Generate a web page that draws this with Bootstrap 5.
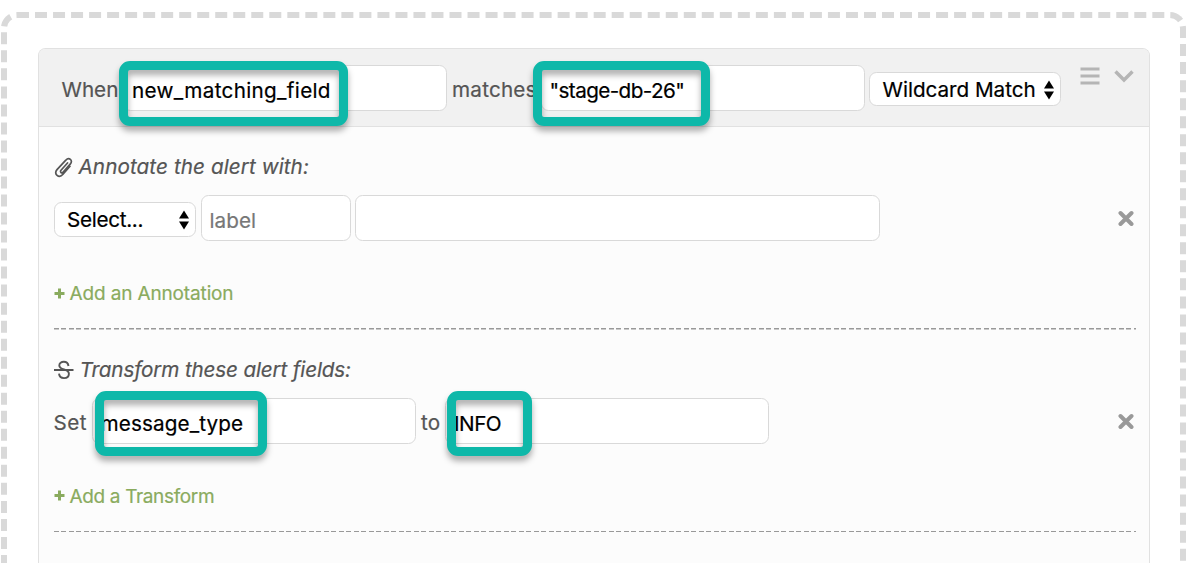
<!DOCTYPE html>
<html lang="en">
<head>
<meta charset="utf-8">
<meta name="viewport" content="width=device-width, initial-scale=1">
<title>Alert rule</title>
<link href="https://cdn.jsdelivr.net/npm/bootstrap@5.3.0/dist/css/bootstrap.min.css" rel="stylesheet">
<style>
  body { font-family: Inter, "Liberation Sans", sans-serif; font-size: 20.7px; line-height: 30px; color: #555; background: #fff; height: 100vh; overflow: hidden; padding-top: 12px; -webkit-text-stroke: .2px; }
  .drop-zone { margin-left: 1px; width: 1185px; height: calc(100vh - 12px); border: 6px dashed #d9d9d9; border-bottom: 0; border-radius: 16px 16px 0 0; padding: 30px 30.5px 0; }
  .rule-card { width: 1112.5px; height: 100%; border: 1.5px solid #e1e1e1; border-bottom: 0; border-radius: 7.5px 7.5px 0 0; background: #fcfcfc; --bs-card-color: #555; }
  .rule-head { height: 78px; padding: 15.5px 15px 0 23px; background: #f1f1f1; border-bottom: 1.5px solid #e1e1e1; border-radius: 6px 6px 0 0; }
  .rule-body { padding: 0 15px; }
  .section { height: 202.5px; padding-top: 24.5px; background: repeating-linear-gradient(90deg, #999 0 5px, transparent 5px 7.5px) left bottom / 100% 1.5px no-repeat; margin-right: -1.5px; padding-right: 1.5px; }
  .section h2 { font-size: 20.7px; line-height: 30px; font-style: italic; font-weight: 400; margin: 0 0 13.5px; height: 30px; gap: 6px; }
  .field { position: relative; }
  .form-control.box { height: 46px; padding: 5px 8px 0; border: 1.5px solid #d9d9d9; border-radius: 7.5px; font-size: 20.7px; line-height: 30px; color: #000; background: #fff; }
  .form-control.box::placeholder { color: #777; opacity: 1; }
  .w-rule { width: 324px; } .w-type { width: 142.5px; } .w-label { width: 150px; } .w-value { width: 525px; } .w-mode { width: 191.5px; }
  .pick { height: 34.5px; margin-top: 3px; padding: 1px 5px 0 12.5px; border: 1.5px solid #d9d9d9; border-radius: 7.5px; background: #fff; color: #000; line-height: 32px; text-align: left; }
  .ring { position: absolute; top: -3.5px; height: 65px; border: 9px solid #0eb8a9; border-radius: 11px; filter: drop-shadow(0 5px 3px rgba(0,0,0,.32)); pointer-events: none; z-index: 2; }
  .ring-field { left: -4px; width: 229px; } .ring-value { left: -8px; width: 177px; }
  .ring-key { left: 3px; top: -7px; width: 172px; } .ring-to { left: 2px; top: -7px; width: 85px; }
  .lbl-when { width: 61.5px; } .lbl-matches { width: 93.500px; letter-spacing: .2px; padding-left: 5px; }
  .lbl-set { width: 38px; letter-spacing: .5px; } .lbl-to { width: 25.5px; padding-left: 1.5px; letter-spacing: .3px; }
  label { padding-top: 5px; }
  .t-field { letter-spacing: .32px; } .t-value { letter-spacing: -.6px; } .t-mode { letter-spacing: -.03px; }
  .t-key { letter-spacing: .12px; }
  .t-ann { letter-spacing: .07px; } .t-trans { letter-spacing: -.17px; padding-top: 1.5px; } .t-info { letter-spacing: -.5px; } .t-sel { letter-spacing: -.3px; }
  .add { font-size: 19px; line-height: 28px; color: #8aab5e; text-decoration: none; gap: 5px; margin-top: 39px; letter-spacing: -.14px; }
  .add svg { margin-bottom: 2px; }
  .add-t { letter-spacing: -.35px; }
  .bare { border: 0; background: none; padding: 0; line-height: 0; }
  .btn-fold { margin-left: 14px; }
  .gap-field { margin-left: 4.6px; }
  svg { display: block; flex: none; }
</style>
</head>
<body>
<main class="drop-zone">
  <section class="card rule-card">
    <header class="rule-head d-flex align-items-start">
      <div class="d-flex align-items-center">
        <label class="lbl-when text-nowrap">When</label>
        <div class="field"><input class="form-control box w-rule t-field" value="new_matching_field"><span class="ring ring-field"></span></div>
        <label class="lbl-matches text-nowrap">matches</label>
        <div class="field"><input class="form-control box w-rule t-value" value='"stage-db-26"'><span class="ring ring-value"></span></div>
        <button type="button" class="pick w-mode t-mode d-flex align-items-center justify-content-between gap-field"><span>Wildcard Match</span>
          <svg width="12" height="22" viewBox="0 0 12 22"><path d="M6 1.500 11 9.500H1zM6 20.500 1 12.500h10z"/></svg></button>
      </div>
      <div class="d-flex ms-auto">
        <button type="button" class="bare" aria-label="Reorder"><svg width="20" height="22" viewBox="0 0 20 22"><path d="M.5 4h19M.5 11h19M.5 18h19" stroke="#b5b5b5" stroke-width="3"/></svg></button>
        <button type="button" class="bare btn-fold" aria-label="Collapse"><svg width="20" height="22" viewBox="0 0 20 22"><path d="M1.500 6.500 10 15l8.500-8.500" fill="none" stroke="#b5b5b5" stroke-width="3.400"/></svg></button>
      </div>
    </header>
    <div class="rule-body">
      <section class="section">
        <h2 class="d-flex align-items-center t-ann"><svg width="19" height="22" viewBox="0 0 19 22"><path d="M13.500 7 7 14.300c-1.500 1.700.7 3.500 2.200 1.800l7.200-8.200c3-3.500-1.500-7.200-4.600-3.700L3 13.600c-3.900 4.500 2 9.300 6 4.700l7-8" fill="none" stroke="#555" stroke-width="1.700" stroke-linecap="round"/></svg><span>Annotate the alert with:</span></h2>
        <div class="d-flex align-items-center">
          <button type="button" class="pick w-type t-sel d-flex align-items-center justify-content-between"><span>Select...</span>
            <svg width="12" height="22" viewBox="0 0 12 22"><path d="M6 1.500 11 9.500H1zM6 20.500 1 12.500h10z"/></svg></button>
          <input class="form-control box w-label gap-field" placeholder="label">
          <input class="form-control box w-value gap-field">
          <button type="button" class="bare ms-auto" aria-label="Remove"><svg width="16" height="16" viewBox="0 0 16 16"><path d="m2.500 3 11 11M13.500 3l-11 11" stroke="#999" stroke-width="4" stroke-linecap="round"/></svg></button>
        </div>
        <a href="#" class="add d-inline-flex align-items-center"><svg width="11" height="11" viewBox="0 0 11 11"><path d="M5.500.5v10M.5 5.500h10" stroke="#8aab5e" stroke-width="3"/></svg><span>Add an Annotation</span></a>
      </section>
      <section class="section">
        <h2 class="d-flex align-items-center t-trans"><svg width="20" height="20" viewBox="0 0 20 20"><path d="M14.500 6c-.4-2.700-2.200-4.200-4.700-4.200C7.300 1.800 5.300 3.200 5.300 5.400c0 5 9.600 3 9.600 8.300 0 2.700-2 4.400-4.900 4.400s-4.700-1.500-5-4.400M0 10h19.500" fill="none" stroke="#555" stroke-width="1.900"/></svg><span>Transform these alert fields:</span></h2>
        <div class="d-flex align-items-center">
          <label class="lbl-set">Set</label>
          <div class="field"><input class="form-control box w-rule t-key" value="message_type"><span class="ring ring-key"></span></div>
          <label class="lbl-to text-nowrap ms-1">to</label>
          <div class="field"><input class="form-control box w-rule t-info" value="INFO"><span class="ring ring-to"></span></div>
          <button type="button" class="bare ms-auto" aria-label="Remove"><svg width="16" height="16" viewBox="0 0 16 16"><path d="m2.500 3 11 11M13.500 3l-11 11" stroke="#999" stroke-width="4" stroke-linecap="round"/></svg></button>
        </div>
        <a href="#" class="add add-t d-inline-flex align-items-center"><svg width="11" height="11" viewBox="0 0 11 11"><path d="M5.500.5v10M.5 5.500h10" stroke="#8aab5e" stroke-width="3"/></svg><span>Add a Transform</span></a>
      </section>
    </div>
  </section>
</main>
<script src="https://cdn.jsdelivr.net/npm/bootstrap@5.3.0/dist/js/bootstrap.bundle.min.js"></script>
</body>
</html>
